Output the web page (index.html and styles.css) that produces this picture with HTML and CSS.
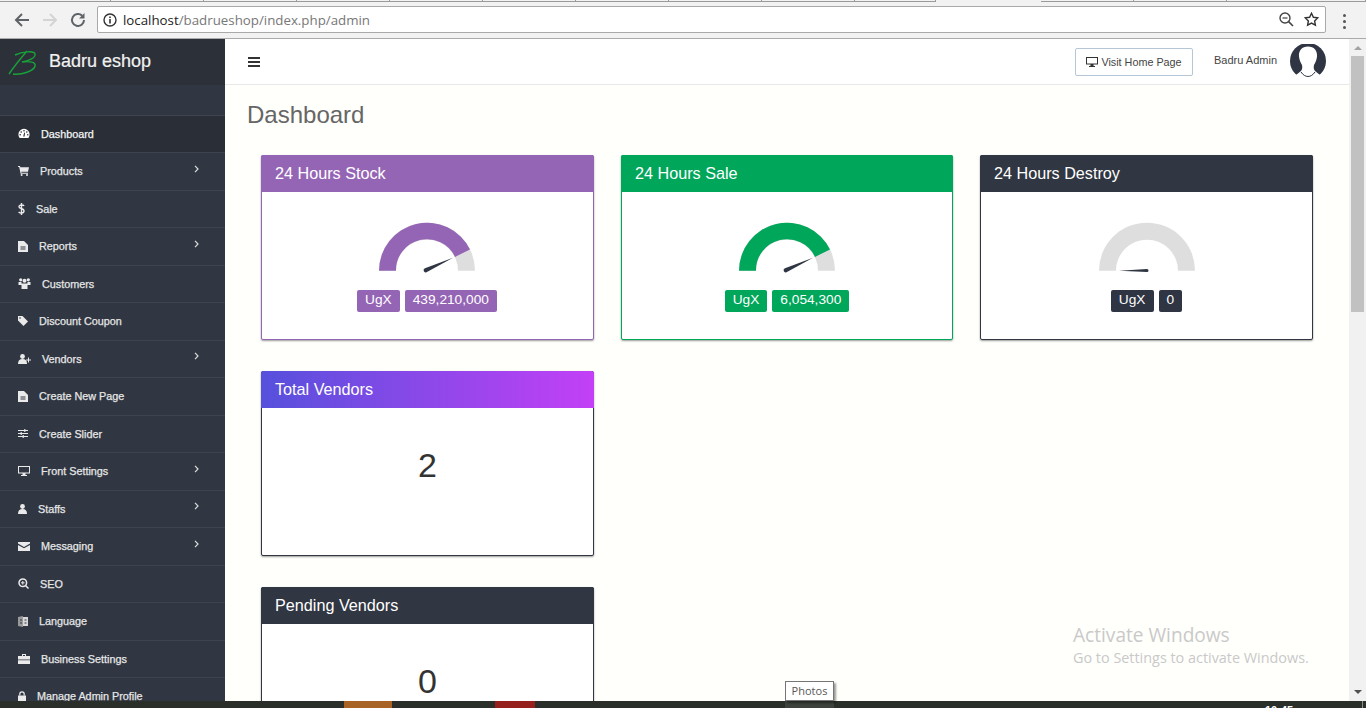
FILE: index.html
```html
<!DOCTYPE html>
<html lang="en">
<head>
    <meta charset="UTF-8">
    <title>Badru eshop - Dashboard</title>
    <link rel="stylesheet" href="styles.css">
</head>
<body>
    <div class="tab-strip">
        <span class="tab tab-first"></span><span class="tab"></span><span class="tab"></span><span class="tab"></span>
        <span class="tab"></span><span class="tab"></span><span class="tab"></span><span class="tab"></span>
        <span class="tab"></span><span class="tab tab-before-active"></span>
        <span class="tab"></span><span class="tab"></span><span class="tab tab-rest"></span>
    </div>

    <div class="toolbar">
        <svg class="tool-icon" width="18" height="18" viewBox="0 0 18 18"><path d="M16 9H3M9 3L3 9l6 6" fill="none" stroke="#5f6368" stroke-width="2"/></svg>
        <svg class="tool-icon" width="18" height="18" viewBox="0 0 18 18"><path d="M2 9h13M9 3l6 6-6 6" fill="none" stroke="#d3d4d5" stroke-width="2"/></svg>
        <svg class="tool-icon" width="18" height="18" viewBox="0 0 18 18"><path d="M15 9a6 6 0 1 1-1.800-4.300" fill="none" stroke="#5f6368" stroke-width="2"/><path d="M15.500 2v5.500H10z" fill="#5f6368"/></svg>
        <div class="address-bar">
            <svg class="info-icon" width="14" height="14" viewBox="0 0 14 14"><circle cx="7" cy="7" r="6" fill="none" stroke="#333" stroke-width="1.400"/><path d="M6.200 6h1.600v4.400H6.200zM6.200 3.400h1.600V5H6.200z" fill="#333"/></svg>
            <span class="url-host">localhost</span><span class="url-path">/badrueshop/index.php/admin</span>
            <svg class="address-end zoom-out" width="15" height="15" viewBox="0 0 15 15"><circle cx="6" cy="6" r="5" fill="none" stroke="#444" stroke-width="1.400"/><path d="M9.600 9.600L14 14" stroke="#444" stroke-width="1.600"/><path d="M3.500 6h5" stroke="#444" stroke-width="1.200"/></svg>
            <svg class="address-end" width="15" height="15" viewBox="0 0 15 15"><path d="M7.500 1.300l1.900 4 4.300.6-3.100 3 .8 4.300-3.900-2.100-3.900 2.100.8-4.300-3.100-3 4.300-.6z" fill="none" stroke="#333" stroke-width="1.400"/></svg>
        </div>
        <div class="chrome-menu"><i></i><i></i><i></i></div>
    </div>

    <div class="app">
        <aside class="sidebar">
            <div class="brand">
                <svg class="brand-logo" width="30" height="26" viewBox="0 0 30 26"><path d="M1 24C7 15 13 8 19 1M7 5C14 2 26 0 27 4 28 8 20 11 14 12 22 11 28 12 27 16 26 21 14 25 5 24" fill="none" stroke="#17a338" stroke-width="1.400"/></svg>
                <span>Badru eshop</span>
            </div>
            <div class="brand-spacer"></div>
            <ul class="menu">
                <li class="menu-item active">
                    <svg width="12" height="11" viewBox="0 0 12 11"><path d="M6 .8a5.600 5.600 0 0 0-5.600 5.600c0 1.300.4 2.500 1.200 3.500h8.800c.8-1 1.200-2.200 1.200-3.500A5.600 5.600 0 0 0 6 .8z" fill="#fff"/><g fill="#2a2e37"><circle cx="6" cy="2.700" r=".8"/><circle cx="3.200" cy="4" r=".8"/><circle cx="8.800" cy="4" r=".8"/><circle cx="2.200" cy="6.800" r=".8"/><circle cx="9.800" cy="6.800" r=".8"/><path d="M5.200 8.500l1-4 .8.200-.4 3.800z"/></g></svg>
                    <a>Dashboard</a>
                </li>
                <li class="menu-item">
                    <svg width="11" height="10" viewBox="0 0 11 10"><path d="M0 0h2l.4 1.300H11L10 5.800H3.300l.2 1H10v1H2.600L1.200 1H0z" fill="#eaeaea"/><circle cx="3.600" cy="9" r="1" fill="#eaeaea"/><circle cx="9" cy="9" r="1" fill="#eaeaea"/></svg>
                    <a>Products</a>
                    <svg class="chevron" width="5" height="8" viewBox="0 0 5 8"><path d="M1 .8L4 4 1 7.200" fill="none" stroke="#ddd" stroke-width="1.200"/></svg>
                </li>
                <li class="menu-item">
                    <svg width="7" height="12" viewBox="0 0 7 12"><path d="M6.200 2.800C5.500 2.200 4.500 1.900 3.500 2 2 2 1 2.700 1 3.700c0 2.300 5 1.300 5 4.300 0 1.100-1 1.900-2.500 2-1.100 0-2.200-.4-2.900-1.100M3.500 0v12" fill="none" stroke="#eaeaea" stroke-width="1.400"/></svg>
                    <a>Sale</a>
                </li>
                <li class="menu-item">
                    <svg width="10" height="11" viewBox="0 0 10 11"><path d="M0 0h6l4 4v7H0z" fill="#eaeaea"/><path d="M2.500 6h5M2.500 8h5" stroke="#303642"/></svg>
                    <a>Reports</a>
                    <svg class="chevron" width="5" height="8" viewBox="0 0 5 8"><path d="M1 .8L4 4 1 7.200" fill="none" stroke="#ddd" stroke-width="1.200"/></svg>
                </li>
                <li class="menu-item">
                    <svg width="13" height="11" viewBox="0 0 12 11" fill="#eaeaea"><circle cx="2.200" cy="1.800" r="1.600"/><circle cx="9.800" cy="1.800" r="1.600"/><circle cx="6" cy="2.800" r="2"/><path d="M0 4h3v3H0zM9 4h3v3H9zM3 5.500h6V11H3z"/></svg>
                    <a>Customers</a>
                </li>
                <li class="menu-item">
                    <svg width="10" height="10" viewBox="0 0 10 10"><path d="M0 0h4.500L10 5.500 5.500 10 0 4.500z" fill="#eaeaea"/><circle cx="2" cy="2" r=".8" fill="#303642"/></svg>
                    <a>Discount Coupon</a>
                </li>
                <li class="menu-item">
                    <svg width="13" height="10" viewBox="0 0 13 10" fill="#eaeaea"><circle cx="4.500" cy="2.500" r="2.400"/><path d="M0 10c0-3.500 1.500-5 4.500-5S9 6.500 9 10z"/><path d="M10 3.500h1v2h2v1h-2v2h-1v-2H8v-1h2z"/></svg>
                    <a>Vendors</a>
                    <svg class="chevron" width="5" height="8" viewBox="0 0 5 8"><path d="M1 .8L4 4 1 7.200" fill="none" stroke="#ddd" stroke-width="1.200"/></svg>
                </li>
                <li class="menu-item">
                    <svg width="10" height="11" viewBox="0 0 10 11"><path d="M0 0h6l4 4v7H0z" fill="#eaeaea"/><path d="M2.500 6h5M2.500 8h5" stroke="#303642"/></svg>
                    <a>Create New Page</a>
                </li>
                <li class="menu-item">
                    <svg width="10" height="9" viewBox="0 0 10 9"><path d="M0 1.500h10M0 4.500h10M0 7.500h10" stroke="#eaeaea"/><path d="M6 .3h1.500v2.400H6zM2.500 3.300H4v2.400H2.500zM4.500 6.300H6v2.400H4.500z" fill="#eaeaea"/></svg>
                    <a>Create Slider</a>
                </li>
                <li class="menu-item">
                    <svg width="12" height="10" viewBox="0 0 12 10"><path d="M0 0h12v7.500H7.500V9H9v1H3V9h1.500V7.500H0zM1 1v5.500h10V1z" fill="#eaeaea" fill-rule="evenodd"/></svg>
                    <a>Front Settings</a>
                    <svg class="chevron" width="5" height="8" viewBox="0 0 5 8"><path d="M1 .8L4 4 1 7.200" fill="none" stroke="#ddd" stroke-width="1.200"/></svg>
                </li>
                <li class="menu-item">
                    <svg width="9" height="10" viewBox="0 0 9 10" fill="#eaeaea"><circle cx="4.500" cy="2.500" r="2.400"/><path d="M0 10c0-3.500 1.500-5 4.500-5S9 6.500 9 10z"/></svg>
                    <a>Staffs</a>
                    <svg class="chevron" width="5" height="8" viewBox="0 0 5 8"><path d="M1 .8L4 4 1 7.200" fill="none" stroke="#ddd" stroke-width="1.200"/></svg>
                </li>
                <li class="menu-item">
                    <svg width="12" height="9" viewBox="0 0 12 9"><path d="M0 0h12v1.500L6 5 0 1.500zM0 3l6 3.300L12 3v6H0z" fill="#eaeaea"/></svg>
                    <a>Messaging</a>
                    <svg class="chevron" width="5" height="8" viewBox="0 0 5 8"><path d="M1 .8L4 4 1 7.200" fill="none" stroke="#ddd" stroke-width="1.200"/></svg>
                </li>
                <li class="menu-item">
                    <svg width="11" height="11" viewBox="0 0 11 11"><circle cx="4.800" cy="4.800" r="3.800" fill="none" stroke="#eaeaea" stroke-width="1.500"/><path d="M7.500 7.500L10.500 10.500" stroke="#eaeaea" stroke-width="1.500"/><path d="M4.800 3v3.600M3 4.800h3.600" stroke="#eaeaea"/></svg>
                    <a>SEO</a>
                </li>
                <li class="menu-item">
                    <svg width="10" height="11" viewBox="0 0 10 11"><path d="M0 1l5-1v11L0 10z" fill="#9a9a9a"/><path d="M5 1h5v9H5z" fill="#d8d8d8"/><path d="M2 4h2M2 7h2M6.500 4h2M6.500 7h2" stroke="#303642"/></svg>
                    <a>Language</a>
                </li>
                <li class="menu-item">
                    <svg width="12" height="10" viewBox="0 0 12 10"><path d="M4 0h4v2h4v3.500H0V2h4zM5 1v1h2V1zM0 6.200h12V10H0z" fill="#eaeaea" fill-rule="evenodd"/></svg>
                    <a>Business Settings</a>
                </li>
                <li class="menu-item">
                    <svg width="8" height="10" viewBox="0 0 8 10"><path d="M0 4.500h8V10H0z" fill="#eaeaea"/><path d="M1.800 4.500V3a2.200 2.200 0 0 1 4.400 0v1.500" fill="none" stroke="#eaeaea" stroke-width="1.200"/></svg>
                    <a>Manage Admin Profile</a>
                </li>
            </ul>
        </aside>

        <div class="main">
            <header class="topbar">
                <div class="hamburger"><i></i><i></i><i></i></div>
                <a class="visit-btn">
                    <svg width="12" height="10" viewBox="0 0 12 10"><path d="M0 0h12v7.500H7.500V9H9v1H3V9h1.500V7.500H0zM1 1v5.500h10V1z" fill="#333" fill-rule="evenodd"/></svg>
                    Visit Home Page
                </a>
                <span class="admin-name">Badru Admin</span>
                <svg class="avatar" width="36" height="34" viewBox="0 0 36 34">
                    <circle cx="18" cy="17" r="18" fill="#2f3542"/>
                    <path d="M18 2.500c-6 0-9.500 4-9 10 .3 3 1.500 6 3 8.500.6 2.500.2 4.500-1 6L6 31v3h24v-3l-5-4c-1.200-1.500-1.600-3.500-1-6 1.500-2.500 2.700-5.500 3-8.500.5-6-3-10-9-10z" fill="#fff"/>
                    <path d="M11 28c2 3 4.500 4.500 7 4.500s5-1.500 7-4.500" fill="none" stroke="#2f3542"/>
                </svg>
            </header>

            <div class="page-body">
                <h1 class="page-title">Dashboard</h1>
                <div class="card-grid">
                    <section class="card card-purple">
                        <h2 class="card-head">24 Hours Stock</h2>
                        <div class="card-body">
                            <svg class="gauge" width="100" height="54" viewBox="0 -0.700 100 54">
                                <path d="M2 50a48 48 0 0 1 96 0H81a31 31 0 0 0-62 0z" fill="#dedede"/>
                                <path d="M2 50a48 48 0 0 1 91-21.300L78 36.200A31 31 0 0 0 19 50z" fill="#9565b5"/>
                                <path d="M48 47.500L76 37 49.500 51.500a2 2 0 0 1-1.500-4z" fill="#2f3542"/>
                            </svg>
                            <div class="badges"><span class="badge">UgX</span><span class="badge">439,210,000</span></div>
                        </div>
                    </section>
                    <section class="card card-green">
                        <h2 class="card-head">24 Hours Sale</h2>
                        <div class="card-body">
                            <svg class="gauge" width="100" height="54" viewBox="0 -0.700 100 54">
                                <path d="M2 50a48 48 0 0 1 96 0H81a31 31 0 0 0-62 0z" fill="#dedede"/>
                                <path d="M2 50a48 48 0 0 1 91-21.300L78 36.200A31 31 0 0 0 19 50z" fill="#00a65a"/>
                                <path d="M48 47.500L76 37 49.500 51.500a2 2 0 0 1-1.500-4z" fill="#2f3542"/>
                            </svg>
                            <div class="badges"><span class="badge">UgX</span><span class="badge">6,054,300</span></div>
                        </div>
                    </section>
                    <section class="card card-dark">
                        <h2 class="card-head">24 Hours Destroy</h2>
                        <div class="card-body">
                            <svg class="gauge" width="100" height="54" viewBox="0 -0.700 100 54">
                                <path d="M2 50a48 48 0 0 1 96 0H81a31 31 0 0 0-62 0z" fill="#dedede"/>
                                <path d="M22 50l28-1.800a1.500 1.500 0 0 1 0 3z" fill="#2f3542"/>
                            </svg>
                            <div class="badges"><span class="badge">UgX</span><span class="badge">0</span></div>
                        </div>
                    </section>
                    <section class="card card-dark card-new-row">
                        <h2 class="card-head head-gradient">Total Vendors</h2>
                        <div class="card-body"><div class="count">2</div></div>
                    </section>
                    <section class="card card-dark card-new-row">
                        <h2 class="card-head">Pending Vendors</h2>
                        <div class="card-body"><div class="count">0</div></div>
                    </section>
                </div>
            </div>
            <div class="activate-note">
                <div class="activate-title">Activate Windows</div>
                <div class="activate-sub">Go to Settings to activate Windows.</div>
            </div>
        </div>

        <div class="scrollbar">
            <span class="arrow-up"></span>
            <span class="scroll-thumb"></span>
            <span class="arrow-down"></span>
        </div>
    </div>

    <div class="taskbar">
        <span class="task task-orange"></span>
        <span class="task task-red"></span>
        <span class="task task-photos"></span>
        <span class="clock">10:45</span>
        <span class="task task-edge"></span>
    </div>
    <div class="photos-tip">Photos</div>
</body>
</html>
```

FILE: styles.css
```css
/* browser frame */
html, body {
    height: 100%;
}

body {
    margin: 0;
    height: 708px;
    overflow: hidden;
    position: relative;
    display: flex;
    flex-direction: column;
    font-family: "Liberation Sans", Arial, sans-serif;
    background-color: #fffffb;
}

.tab-strip {
    height: 6px;
    flex: none;
    display: flex;
    align-items: flex-start;
    background-color: #f2f2f2;
}

.tab {
    width: 93px;
    height: 2px;
    box-sizing: border-box;
    border-bottom: 1px solid #9a9a9a;
    border-right: 1px solid #9a9a9a;
}

.tab-first {
    width: 111px;
}

.tab-before-active {
    width: 81px;
    margin-right: 105px;
}

.tab-rest {
    flex: 1;
}

.toolbar {
    height: 33px;
    flex: none;
    box-sizing: border-box;
    display: flex;
    align-items: flex-start;
    padding: 0 0 0 13px;
    background-color: #f2f2f2;
    border-bottom: 1px solid #aaa;
}

.tool-icon {
    margin: 5px 10px 0 0;
}

.address-bar {
    width: 1229px;
    height: 27px;
    box-sizing: border-box;
    display: flex;
    align-items: center;
    padding: 0 6px 0 5px;
    background-color: #fff;
    border: 1px solid #a9a9a9;
    border-radius: 2px;
    font-family: "Open Sans", sans-serif;
    font-size: 13.3px;
}

.info-icon {
    margin-right: 6px;
}

.url-host {
    color: #222;
}

.url-path {
    color: #777;
}

.address-end {
    margin-left: 10px;
}

.zoom-out {
    margin-left: auto;
}

.chrome-menu {
    display: flex;
    flex-direction: column;
    gap: 3px;
    margin: 8px 0 0 17px;
}

.chrome-menu i {
    width: 3px;
    height: 3px;
    border-radius: 50%;
    background-color: #555;
}

/* app */
.app {
    flex: 1;
    min-height: 0;
    display: flex;
    overflow: hidden;
}

.sidebar {
    width: 225px;
    flex: none;
    background-color: #303642;
    overflow: hidden;
}

.brand {
    height: 46px;
    display: flex;
    align-items: center;
    padding-left: 8px;
    background-color: #2c3139;
    color: #f2f2f2;
    font-size: 18px;
    -webkit-text-stroke: 0.2px #f2f2f2;
}

.brand-logo {
    margin-right: 11px;
    margin-top: 2px;
}

.brand span {
    margin-top: -2px;
}

.brand-spacer {
    height: 29.5px;
}

.menu {
    list-style: none;
    margin: 0;
    padding: 0;
}

.menu-item {
    height: 37.5px;
    box-sizing: border-box;
    display: flex;
    align-items: center;
    gap: 11px;
    padding: 0 26px 0 18px;
    border-top: 1px solid #3d4350;
    color: #e6e6e6;
    font-size: 10.8px;
    -webkit-text-stroke: 0.25px #e6e6e6;
}

.menu-item.active {
    background-color: #2a2e37;
    color: #fff;
}

.menu-item svg {
    flex: none;
}

.chevron {
    margin-left: auto;
    margin-bottom: 5px;
}

.main {
    flex: 1;
    min-width: 0;
    position: relative;
    display: flex;
    flex-direction: column;
}

.topbar {
    height: 46px;
    flex: none;
    box-sizing: border-box;
    display: flex;
    align-items: center;
    padding: 0 23px 0 23px;
    background-color: #fff;
    border-bottom: 1px solid #e8e8e8;
}

.hamburger {
    display: flex;
    flex-direction: column;
    gap: 2px;
    margin-right: auto;
}

.hamburger i {
    width: 12px;
    height: 2px;
    background-color: #333;
}

.visit-btn {
    width: 118px;
    height: 28px;
    box-sizing: border-box;
    display: flex;
    align-items: center;
    justify-content: center;
    gap: 3px;
    border: 1px solid #b5c7d6;
    border-radius: 2px;
    color: #444;
    font-size: 10.8px;
}

.admin-name {
    margin-left: 21px;
    margin-top: -4px;
    color: #444;
    font-size: 11px;
}

.avatar {
    margin-left: 13px;
    margin-top: -1px;
}

.page-body {
    padding: 0 36px 0 22px;
}

.page-title {
    margin: 16px 0 27px;
    height: 27px;
    line-height: 27px;
    color: #666;
    font-size: 24px;
    font-weight: normal;
}

.card-grid {
    display: grid;
    grid-template-columns: 333px 332px 333px;
    grid-auto-rows: 185px;
    column-gap: 27px;
    row-gap: 31px;
    padding-left: 14px;
}

.card {
    box-sizing: border-box;
    background-color: #fff;
    border: 1px solid #303642;
    border-radius: 2px;
    box-shadow: 0 1px 2px rgba(0, 0, 0, 0.4);
}

.card-new-row {
    grid-column: 1;
}

.card-head {
    height: 37px;
    margin: -1px -1px 0;
    padding: 0 14px;
    display: flex;
    align-items: center;
    box-sizing: content-box;
    color: #fff;
    background-color: #303642;
    border-radius: 2px 2px 0 0;
    font-size: 16.2px;
    font-weight: normal;
}

.head-gradient {
    background: linear-gradient(90deg, #5650dc, #c340f7);
}

.card-purple {
    border-color: #9565b5;
}

.card-purple .card-head,
.card-purple .badge {
    background-color: #9565b5;
}

.card-purple .card-body {
    padding-right: 1px;
}

.card-green {
    border-color: #00a65a;
}

.card-green .card-head,
.card-green .badge {
    background-color: #00a65a;
}

.card-body {
    display: flex;
    flex-direction: column;
    align-items: center;
}

.gauge {
    margin-top: 28px;
    display: block;
}

.badges {
    display: flex;
    gap: 5px;
    margin-top: 16px;
}

.badge {
    height: 22px;
    line-height: 20px;
    padding: 0 8px;
    border-radius: 2px;
    color: #fff;
    background-color: #2f3542;
    font-size: 13.7px;
}

.count {
    margin-top: 39px;
    line-height: 36px;
    color: #333;
    font-size: 34px;
}

.activate-note {
    position: absolute;
    left: 848px;
    top: 584px;
    color: #c9c9c9;
    font-family: "Open Sans", sans-serif;
}

.activate-title {
    font-size: 19.1px;
    line-height: 24px;
}

.activate-sub {
    font-size: 14.4px;
    line-height: 22px;
}

.scrollbar {
    width: 17px;
    flex: none;
    position: relative;
    background-color: #f1f1f1;
}

.scroll-thumb {
    position: absolute;
    left: 2px;
    right: 2px;
    top: 17px;
    height: 256px;
    background-color: #c1c1c1;
}

.arrow-up,
.arrow-down {
    position: absolute;
    left: 5px;
    width: 0;
    height: 0;
    border-left: 4px solid transparent;
    border-right: 4px solid transparent;
}

.arrow-up {
    top: 7px;
    border-bottom: 4px solid #a3a3a3;
}

.arrow-down {
    bottom: 7px;
    border-top: 4px solid #505050;
}

/* windows taskbar, only its top edge is on screen */
.taskbar {
    height: 7px;
    flex: none;
    position: relative;
    overflow: hidden;
    background-color: #2a3029;
}

.task {
    position: absolute;
    top: 0;
    bottom: 0;
}

.task-orange {
    left: 344px;
    width: 48px;
    background-color: #a86425;
}

.task-red {
    left: 495px;
    width: 40px;
    background-color: #96201c;
}

.task-photos {
    left: 785px;
    width: 49px;
    background-color: #3d423c;
}

.task-edge {
    left: 1362px;
    width: 1px;
    background-color: #8a8d88;
}

.clock {
    position: absolute;
    left: 1265px;
    top: 3px;
    color: #fff;
    font-size: 11px;
    font-weight: bold;
}

.photos-tip {
    position: absolute;
    left: 785px;
    top: 681px;
    width: 49px;
    height: 20px;
    box-sizing: border-box;
    border: 1px solid #767676;
    background-color: #fff;
    box-shadow: 2px 2px 2px rgba(0, 0, 0, 0.4);
    color: #575757;
    font-family: "Open Sans", sans-serif;
    font-size: 11px;
    line-height: 18px;
    text-align: center;
}
```
